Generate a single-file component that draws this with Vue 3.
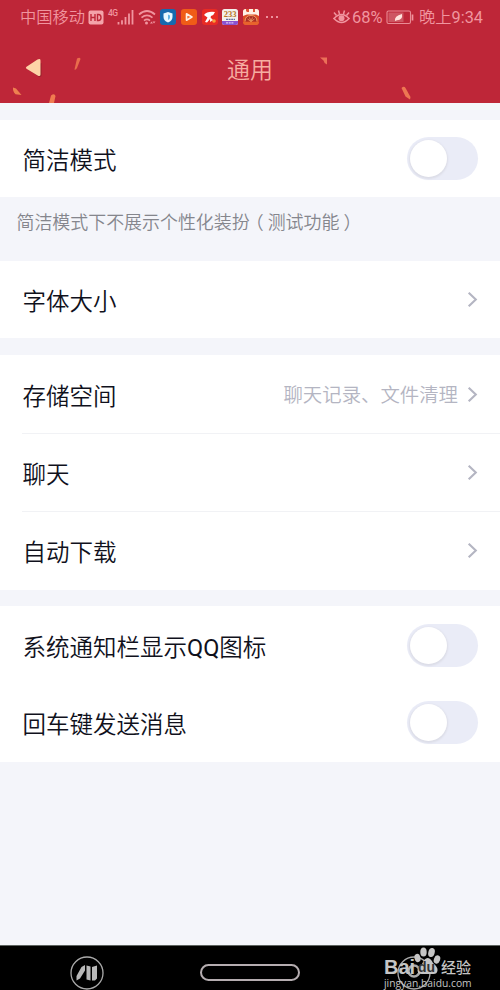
<script setup>
import { reactive } from 'vue'

const groups = reactive([
  {
    rows: [{ label: '简洁模式', type: 'switch', on: false }],
    hint: ['简洁模式下不展示个性化装扮', '测试功能'],
  },
  { rows: [{ label: '字体大小', type: 'link' }] },
  {
    rows: [
      { label: '存储空间', type: 'link', note: '聊天记录、文件清理' },
      { label: '聊天', type: 'link' },
      { label: '自动下载', type: 'link' },
    ],
    lined: true,
  },
  {
    rows: [
      { label: '系统通知栏显示QQ图标', type: 'switch', on: false },
      { label: '回车键发送消息', type: 'switch', on: false },
    ],
  },
])

// Latin runs are set slightly heavier than the Chinese text around them.
const runs = (text) => text.split(/([A-Za-z]+)/).filter(Boolean)
const isLatin = (text) => /^[A-Za-z]/.test(text)
</script>

<template>
  <div class="screen">
    <header class="top">
      <svg class="confetti" width="500" height="103" viewBox="0 0 500 103">
        <path d="M77 58.5q3-1.500 3.500.5l-3.500 9q-1.500 2.500-2.500 1.500z" fill="#e96c4c" />
        <path d="M13 87.500l3 1 5.500 6.500-6-.8q-3-3-2.500-6.700z" fill="#ee8050" />
        <path d="M51 95.500q3.500-2.500 4.500.500l-1.500 7h-5z" fill="#f07b50" />
        <path d="M320 57.500h7v7q-3-1-3.500-4z" fill="#eb7058" />
        <path d="M401.500 88q2.500-2.500 4 0l5 9-.5 2.500-4.500-3z" fill="#ed7752" />
      </svg>
      <div class="status">
        <div class="status-left">
          <span class="carrier">中国移动</span>
          <svg class="hd" width="16" height="15" viewBox="0 0 16 15">
            <rect x=".5" y=".5" width="15" height="14" rx="2" fill="#f4a3aa" />
            <path d="M3 4v7M7 4v7M3 7.500h4M9.500 4.500v6h1q2.500 0 2.500-3t-2.500-3z" fill="none" stroke="#bd2738" stroke-width="1.400" />
          </svg>
          <span class="net">4G</span>
          <svg class="signal" width="17" height="16" viewBox="0 0 17 16">
            <path d="M1.500 13v2.500M5 11.200v4.300M8.500 8v7.500M12 4.500v11M15.500 1v14.500" stroke="#f0959f" stroke-width="1.800" />
          </svg>
          <svg class="wifi" width="18" height="16" viewBox="0 0 18 16">
            <path d="M1 5.500q8-7 16 0M3.500 8.700q5.500-4.500 11 0M6 11.600q3-2.400 6 0" fill="none" stroke="#f0959f" stroke-width="1.700" />
            <circle cx="8.500" cy="14" r="1.500" fill="#f0959f" />
            <path d="M12 14.500l1.500-2 1.500 2zM14.500 12.500h3l-1.500 2z" fill="#f0959f" />
          </svg>
          <svg class="app" width="16" height="16" viewBox="0 0 16 16">
            <rect width="16" height="16" rx="3" fill="#1769ae" />
            <path d="M8 3l4.500 1.500V8q0 3.500-4.500 5.500Q3.500 11.500 3.500 8V4.500z" fill="#e8f7ff" />
            <path d="M8 5.500l2 1v2Q10 10 8 11z" fill="#65b4e5" />
          </svg>
          <svg class="app" width="16" height="16" viewBox="0 0 16 16">
            <rect width="16" height="16" rx="3" fill="#f05c17" />
            <path d="M5.500 4.800v6.400L11 8z" fill="#f5743a" stroke="#fff0e4" stroke-width="1.600" stroke-linejoin="round" />
          </svg>
          <svg class="app" width="16" height="16" viewBox="0 0 16 16">
            <rect width="16" height="16" rx="3" fill="#e92b24" />
            <path d="M2 6q3-4 11-3-1 3-4 4l-1 3-3 3.500-2-.5 2.500-4.500z" fill="#fff" />
            <circle cx="12" cy="12" r="1.800" fill="#f5a03a" />
            <path d="M8 8l3 3-3 2z" fill="#fff3ec" />
          </svg>
          <svg class="app" width="16" height="16" viewBox="0 0 16 16">
            <rect width="16" height="16" rx="2.500" fill="#f3f1ec" />
            <path d="M0 12h16v1.500q0 2.500-2.500 2.500h-11Q0 16 0 13.500z" fill="#8b52d0" />
            <path d="M4 10.300h9" stroke="#6672a0" stroke-width="1.300" stroke-dasharray="2 .6" />
            <path d="M4 13.800h8" stroke="#d9c4f3" stroke-width="1.200" stroke-dasharray="2 .7" />
            <text x="8" y="8" text-anchor="middle" font-family="Liberation Serif, serif" font-size="8.500" font-weight="700" fill="#b77523">233</text>
          </svg>
          <svg class="app" width="16" height="16" viewBox="0 0 16 16">
            <rect width="16" height="16" rx="3" fill="#dc4b25" />
            <path d="M0 7V2.500Q0 0 2.500 0h11Q16 0 16 2.500V7l-3-1.500H4z" fill="#fff1e5" />
            <path d="M3 0h3v3H4L3 2zM10 0h2v3h-2z" fill="#df5534" />
            <path d="M2 12.500Q2 6.500 8 6.500t6 6" fill="#a92f25" stroke="#f2a265" stroke-width="1" />
            <path d="M8 12.500L4.500 10M8 12.500L6.500 8.500M8 12.500l1.500-4M8 12.500l3.500-2.500" stroke="#f2a265" stroke-width=".8" />
            <path d="M0 13h16q-.5 3-2.500 3h-11Q.5 16 0 13z" fill="#e8632c" />
          </svg>
          <svg class="more" width="12" height="4" viewBox="0 0 12 4">
            <path d="M0 1h2v2H0zM5 1h2v2H5zM10 1h2v2h-2z" fill="#ed929d" />
          </svg>
        </div>
        <div class="status-right">
          <svg class="eye" width="17" height="15" viewBox="0 0 17 15">
            <path d="M1 8.500q7.500-8 15 0-7.500 8-15 0z" fill="none" stroke="#f0959f" stroke-width="1.700" />
            <circle cx="8.500" cy="8.300" r="3" fill="#f0959f" />
            <path d="M3.500 5.500L1 2.500M6.500 4L5.500.500M10.500 4l1-3.500M13.500 5.500L16 2.500" stroke="#f0959f" stroke-width="1.500" />
          </svg>
          <span class="percent">68%</span>
          <svg class="battery" width="28" height="15" viewBox="0 0 28 15">
            <rect x="1" y="1" width="23.500" height="12.500" rx="1.500" fill="none" stroke="#e98c95" stroke-width="1.100" />
            <path d="M2.500 2.500h15v9.500h-15z" fill="#ce5662" />
            <path d="M26.500 4.500v6" stroke="#f0959f" stroke-width="1.700" />
            <path d="M9 11q-1-5 7-7 1 6-5 6.200z" fill="#ffe4dd" />
          </svg>
          <span class="clock">晚上<span class="latin">9:34</span></span>
        </div>
      </div>
      <div class="titlebar">
        <svg class="back" width="18" height="20" viewBox="0 0 18 20">
          <path d="M3 11.300L13.500 18.500q2.500 1 3-1V5z" fill="#96202b" />
          <path d="M1.500 8.700L12.500 1.500q3-1.200 3 1v14q0 2.200-2.500 1.300L1.500 10.800q-1.300-1 0-2.100z" fill="#fed3a7" />
        </svg>
        <h1>通用</h1>
      </div>
    </header>

    <main>
      <section v-for="(group, g) in groups" :key="g" class="group">
        <div class="card" :class="{ lined: group.lined }">
          <div v-for="row in group.rows" :key="row.label" class="row">
            <span class="label"><span v-for="(run, i) in runs(row.label)" :key="i" :class="{ latin: isLatin(run) }">{{ run }}</span></span>
            <span v-if="row.note" class="note">{{ row.note }}</span>
            <svg v-if="row.type === 'link'" class="chevron" width="11" height="17" viewBox="0 0 11 17">
              <path d="M1.700 1.700l7.100 6.800-7.100 6.800" fill="none" stroke="#b4b5c2" stroke-width="2.100" />
            </svg>
            <button
              v-else
              class="switch"
              :class="{ on: row.on }"
              role="switch"
              :aria-checked="row.on"
              @click="row.on = !row.on"
            >
              <span class="knob"></span>
            </button>
          </div>
        </div>
        <p v-if="group.hint" class="hint">
          {{ group.hint[0] }}<span class="paren open">（</span>{{ group.hint[1] }}<span class="paren close">）</span>
        </p>
      </section>
    </main>

    <footer class="nav">
      <svg class="nav-left" width="34" height="34" viewBox="0 0 34 34">
        <circle cx="17" cy="17" r="16" fill="none" stroke="#aaa" stroke-width="1.300" />
        <path d="M6.500 24.500v-4.500l5-9 3.500-2v5.500l-5 8zM16.500 9.500l4 1v14l-4-1zM22 11l5-1.500v13L25 24.500h-3z" fill="#b9b9b9" />
      </svg>
      <span class="home"></span>
      <div class="watermark">
        <svg class="ring" width="34" height="34" viewBox="0 0 34 34">
          <circle cx="17" cy="17" r="16" fill="none" stroke="#aaa" stroke-width="1.300" />
          <circle cx="17" cy="15" r="5.500" fill="none" stroke="#aaa" stroke-width="2.500" />
        </svg>
        <svg class="paw" width="28" height="29" viewBox="0 0 28 29">
          <g fill="#c5c5c5">
            <ellipse cx="3.500" cy="11" rx="3" ry="4.200" transform="rotate(-15 3.500 11)" />
            <ellipse cx="9.500" cy="5" rx="3.200" ry="4.600" />
            <ellipse cx="17.500" cy="5.500" rx="3.200" ry="4.600" transform="rotate(15 17.500 5.500)" />
            <ellipse cx="23" cy="12.500" rx="3.100" ry="4.200" transform="rotate(20 23 12.500)" />
            <path d="M13.500 11q3 0 5.500 5 5 4 4.500 7.500-.5 4-5 3.500h-10q-5 .5-5-4 .5-3 4.500-6 2.500-6 5.500-6z" />
          </g>
        </svg>
        <div class="brand"><span class="bai">Bai</span><span class="du">du</span><span class="exp">经验</span></div>
        <div class="url">jingyan.baidu.com</div>
      </div>
    </footer>
  </div>
</template>

<style>
body {
  margin: 0;
}
</style>

<style scoped>
.screen {
  width: 500px;
  height: 990px;
  display: flex;
  flex-direction: column;
  overflow: hidden;
  background: #f4f5fa;
  color: #10111c;
  font-family: Roboto, "Noto Sans CJK SC", sans-serif;
  font-weight: 350;
}
.latin {
  font-weight: 400;
}
.top {
  position: relative;
  flex: none;
  height: 102.500px;
  background: #be2638;
}
.confetti {
  position: absolute;
  left: 0;
  top: 0;
}
.status {
  position: relative;
  height: 34px;
  padding: 0 17px 0 20px;
  display: flex;
  justify-content: space-between;
  color: #f0959f;
  font-size: 16.300px;
  line-height: 34px;
  white-space: nowrap;
}
.status-left,
.status-right {
  display: flex;
  align-items: center;
}
.status svg {
  flex: none;
}
.carrier {
  width: 65px;
  padding-top: 2px;
}
.hd {
  margin-left: 3px;
}
.net {
  width: 8px;
  margin: 0 1px 8px 4px;
  font: 500 8.500px/10px Roboto, sans-serif;
  letter-spacing: -0.700px;
}
.signal {
  margin-right: 4px;
}
.wifi {
  margin-right: 4px;
}
.app {
  margin-right: 4.800px;
}
.more {
  margin-left: 2px;
}
.percent {
  margin-left: 2px;
  width: 31px;
  padding-top: 2px;
  font-size: 16.500px;
  font-weight: 400;
}
.battery {
  margin-left: 3px;
}
.clock {
  margin-left: 5px;
  padding-top: 2px;
  font-size: 16.300px;
}
.titlebar {
  position: relative;
  height: 68px;
  display: grid;
  grid-template-columns: 60px 1fr 60px;
  align-items: center;
}
.back {
  margin-left: 25px;
}
h1 {
  margin: 6px 0 0;
  text-align: center;
  color: #f6ada1;
  font-size: 23px;
  line-height: 34px;
  font-weight: 350;
}
main {
  flex: 1;
  padding-top: 17px;
}
.group {
  margin-bottom: 16.500px;
}
.group:first-child {
  margin-bottom: 0;
}
.card {
  background: #fff;
}
.row {
  height: 77.700px;
  padding: 0 22px 0 22.500px;
  display: flex;
  align-items: center;
}
.lined .row {
  height: 78.300px;
}
.lined .row + .row {
  background: linear-gradient(#f1f2f5, #f1f2f5) 22px 0 / 478px 1px no-repeat;
}
.label {
  flex: 1;
  padding-top: 5px;
  font-size: 23.500px;
  line-height: 34px;
  white-space: nowrap;
}
.note {
  color: #b4b5c2;
  padding-top: 3px;
  font-size: 19.400px;
  line-height: 28px;
  margin-right: 9px;
}
.chevron {
  flex: none;
}
.switch {
  width: 71px;
  height: 43px;
  padding: 2.500px 3px;
  border: 0;
  border-radius: 22px;
  background: #eaecf7;
  display: flex;
  align-items: center;
}
.switch.on {
  justify-content: flex-end;
  background: #12b7f5;
}
.knob {
  width: 37px;
  height: 37px;
  border-radius: 50%;
  background: #fff;
  box-shadow: 0 1px 2px 1px #dcdde7;
}
.hint {
  margin: 0;
  height: 63.500px;
  padding-left: 16.500px;
  color: #85868d;
  font-size: 17.950px;
  line-height: 51px;
  white-space: nowrap;
}
.paren {
  display: inline-block;
  width: 18px;
}
.open {
  text-indent: -4px;
}
.close {
  text-indent: 4px;
}
.nav {
  position: relative;
  flex: none;
  height: 45.500px;
  background: #000;
  border-top: 1px solid #5c625f;
  box-sizing: border-box;
  display: flex;
  align-items: flex-start;
}
.nav-left {
  margin: 10px 0 0 70px;
}
.home {
  width: 100px;
  height: 17px;
  margin: 18.500px 0 0 96px;
  border: 2px solid #b5adb0;
  border-radius: 9px;
  box-sizing: border-box;
}
.watermark {
  position: relative;
  margin-left: 84px;
  width: 100px;
  color: #c5c5c5;
  white-space: nowrap;
}
.ring {
  position: absolute;
  left: 13px;
  top: 10px;
}
.paw {
  position: absolute;
  left: 30px;
  top: 1px;
}
.brand {
  position: relative;
  display: flex;
  margin-top: 13px;
  height: 17px;
  line-height: 18px;
}
.bai,
.du {
  font: 700 20px/16px "Liberation Sans", sans-serif;
}
.bai {
  width: 31px;
}
.du {
  width: 26px;
  color: #333;
  font-size: 14px;
  text-indent: 3px;
}
.exp {
  font-size: 15px;
  font-weight: 500;
}
.url {
  position: relative;
  font: 400 10.300px/14px "Open Sans", sans-serif;
}
</style>
